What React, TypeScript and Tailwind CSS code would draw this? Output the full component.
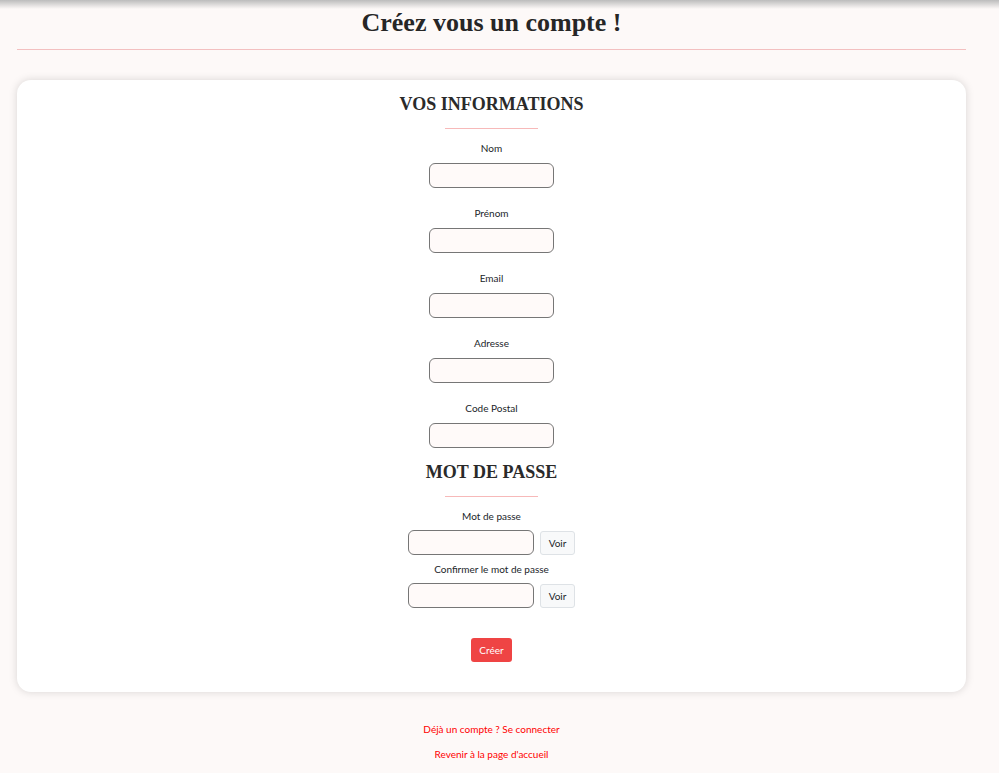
import React from "react";

const fields = ["Nom", "Prénom", "Email", "Adresse", "Code Postal"];

const Label = ({ children }: { children: React.ReactNode }) => (
  <label className="block text-[10px] leading-[14px] text-[#212529]">{children}</label>
);

const Input = ({ type = "text", w = "w-[125px]" }: { type?: string; w?: string }) => (
  <input
    type={type}
    className={`block h-[25px] ${w} rounded-[6px] border border-[#767676] bg-[#fffaf9] px-2 text-[10px] outline-none`}
  />
);

const PasswordRow = ({ label, first }: { label: string; first?: boolean }) => (
  <div className={first ? "mt-[12px] flex flex-col items-center" : "mt-[7px] flex flex-col items-center"}>
    <Label>{label}</Label>
    <div className="mt-[7px] flex items-center gap-[6px]">
      <Input type="password" w="w-[126px]" />
      <button className="block h-[24px] w-[35px] rounded-[3px] border border-[#dee2e6] bg-[#f8f9fa] text-[10px] leading-none text-[#212529]">
        Voir
      </button>
    </div>
  </div>
);

const SectionTitle = ({ children }: { children: React.ReactNode }) => (
  <>
    <h2 className="font-['Liberation_Serif',serif] text-[18px] font-bold leading-[24px] text-[#2a2a2a]">
      {children}
    </h2>
    <div className="mt-[12px] h-px w-[93px] bg-[#f7b9b9]" />
  </>
);

export default function App() {
  return (
    <div className="min-h-screen bg-[#fdf9f8] pb-4 font-['Lato',sans-serif] text-[#212529]">
      <div className="h-[9px] bg-gradient-to-b from-[#bcbcbc] to-transparent" />
      <div className="mr-[16px]">
        <h1 className="text-center font-['Liberation_Serif',serif] text-[26px] font-bold leading-[28px] text-[#262626]">
          Créez vous un compte !
        </h1>
        <div className="mx-[17px] mt-[12px] h-px bg-[#f3c0c0]" />

        <div className="mx-[17px] mt-[30px] flex flex-col items-center rounded-[14px] bg-white pb-[30px] pt-[12px] shadow-[0_0_8px_rgba(0,0,0,0.15)]">
          <SectionTitle>VOS INFORMATIONS</SectionTitle>
          {fields.map((f, i) => (
            <div key={f} className={i === 0 ? "mt-[12px] flex flex-col items-center" : "mt-[18px] flex flex-col items-center"}>
              <Label>{f}</Label>
              <div className="mt-[8px]">
                <Input />
              </div>
            </div>
          ))}

          <div className="mt-[12px] flex flex-col items-center">
            <SectionTitle>MOT DE PASSE</SectionTitle>
          </div>
          <PasswordRow label="Mot de passe" first />
          <PasswordRow label="Confirmer le mot de passe" />

          <button className="mt-[30px] block h-[24px] w-[41px] rounded-[3px] bg-[#ef4444] text-[10px] leading-none text-white">
            Créer
          </button>
        </div>

        <div className="mt-[30px] flex flex-col items-center gap-[11px] text-[10px] leading-[14px] text-[#ff0000]">
          <a href="#">Déjà un compte ? Se connecter</a>
          <a href="#">Revenir à la page d'accueil</a>
        </div>
      </div>
    </div>
  );
}
